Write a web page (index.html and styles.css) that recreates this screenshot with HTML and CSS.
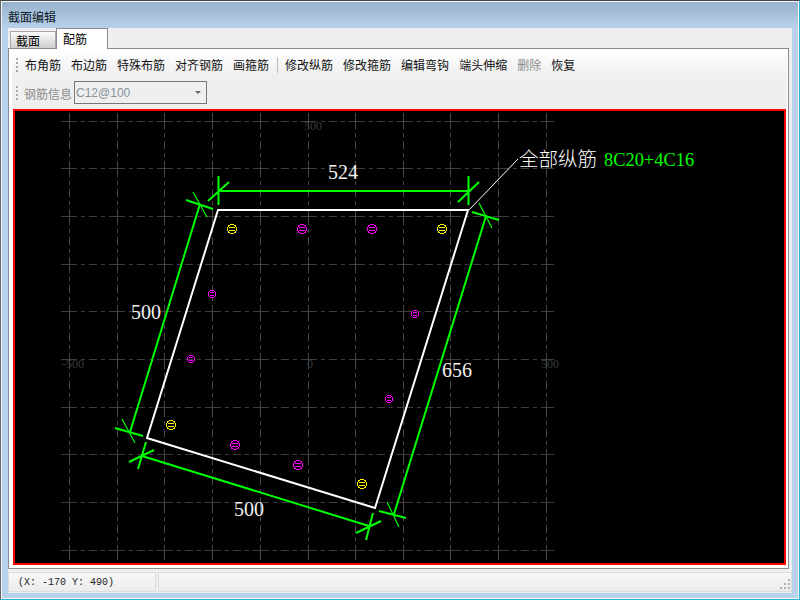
FILE: index.html
```html
<!DOCTYPE html>
<html lang="zh">
<head>
<meta charset="utf-8">
<title>截面编辑</title>
<link rel="stylesheet" href="styles.css">
</head>
<body>
<div class="window">
  <div class="frame">
    <div class="titlebar">截面编辑</div>
    <div class="panel">
      <div class="tabs">
        <div class="tab">截面</div>
        <div class="tab tab-active">配筋</div>
      </div>
      <div class="pane">
        <div class="toolbar toolbar-main">
          <span class="grip"></span>
          <span class="tool">布角筋</span>
          <span class="tool">布边筋</span>
          <span class="tool">特殊布筋</span>
          <span class="tool">对齐钢筋</span>
          <span class="tool">画箍筋</span>
          <span class="sep"></span>
          <span class="tool">修改纵筋</span>
          <span class="tool">修改箍筋</span>
          <span class="tool">编辑弯钩</span>
          <span class="tool">端头伸缩</span>
          <span class="tool tool-off">删除</span>
          <span class="tool">恢复</span>
        </div>
        <div class="toolbar toolbar-info">
          <span class="grip"></span>
          <span class="info-label">钢筋信息</span>
          <div class="combo"><span class="combo-text">C12@100</span><span class="combo-arrow"></span></div>
        </div>
        <div class="canvas">
          <svg class="drawing" viewBox="15 111 770 452" width="770" height="452" xmlns="http://www.w3.org/2000/svg">
            <defs>
              <g id="bar-big"><circle r="4.5"/><path d="M-3 -1.500H3M-3 1.500H3"/></g>
              <g id="bar-small"><circle r="3.5"/><path d="M-2 -1.500H2M-2 1.500H2"/></g>
            </defs>
            <path class="grid" d="M61 121.5H554M61 168.5H554M61 216.5H554M61 264.5H554M61 311.5H554M61 359.5H554M61 407.5H554M61 454.5H554M61 502.5H554M61 550.5H554"/>
            <path class="grid grid-v" d="M69.5 113V560M117.5 113V560M164.5 113V560M212.5 113V560M260.5 113V560M308.5 113V560M355.5 113V560M403.5 113V560M450.5 113V560M498.5 113V560M546.5 113V560"/>
            <text class="axis" x="304" y="130">500</text>
            <text class="axis" x="307" y="368">0</text>
            <text class="axis" x="62" y="368">-500</text>
            <text class="axis" x="541" y="368">500</text>

            <polygon class="outline" points="218,210 468,210 375,508 147,438"/>
            <path class="leader" d="M469 210L518 159"/>

            <path class="dim" d="M218 191H468M200 204L130 432M142 456L369 526M486 216L394 514"/>
            <path class="dim" d="M218.500 176V205M208 201L229 182M468.500 176V205M458 202L479 182"/>
            <path class="dim" d="M186 200L213 209M115 428L143 436M472 212L499 220M379 511L406 518"/>
            <path class="dim" d="M146 442L138 469M129 462L154 450M373 513L366 540M356 533L381 521"/>
            <path class="dim-thin" d="M193 192L207 217M122 419L135 443M479 203L492 228M387 502L399 527"/>

            <use class="bar-yellow" href="#bar-big" x="232" y="229"/>
            <use class="bar-yellow" href="#bar-big" x="442" y="229"/>
            <use class="bar-yellow" href="#bar-big" x="171" y="425"/>
            <use class="bar-yellow" href="#bar-big" x="362" y="484"/>
            <use class="bar-magenta" href="#bar-big" x="302" y="229"/>
            <use class="bar-magenta" href="#bar-big" x="372" y="229"/>
            <use class="bar-magenta" href="#bar-big" x="235" y="445"/>
            <use class="bar-magenta" href="#bar-big" x="298" y="465"/>
            <use class="bar-magenta" href="#bar-small" x="212" y="294"/>
            <use class="bar-magenta" href="#bar-small" x="415" y="314"/>
            <use class="bar-magenta" href="#bar-small" x="191" y="359"/>
            <use class="bar-magenta" href="#bar-small" x="389" y="399"/>

            <text class="size" x="328" y="179">524</text>
            <text class="size" x="131" y="319">500</text>
            <text class="size" x="442" y="377">656</text>
            <text class="size" x="234" y="516">500</text>
            <text class="note" x="519" y="166">全部纵筋</text>
            <text class="note-value" x="604" y="166">8C20+4C16</text>
          </svg>
        </div>
      </div>
      <div class="statusbar">
        <div class="status-cell status-coords">(X: -170 Y: 490)</div>
        <div class="status-cell status-rest">
          <svg class="size-grip" viewBox="0 0 12 12" width="12" height="12" xmlns="http://www.w3.org/2000/svg">
            <path d="M9 0h2v2H9zM5 4h2v2H5zM9 4h2v2H9zM1 8h2v2H1zM5 8h2v2H5zM9 8h2v2H9z"/>
          </svg>
        </div>
      </div>
    </div>
  </div>
</div>
</body>
</html>
```
FILE: styles.css
```css
* { box-sizing: border-box; }
html, body { margin: 0; padding: 0; }
body {
  width: 800px;
  height: 600px;
  overflow: hidden;
  font-family: "Noto Sans CJK SC", "Liberation Sans", sans-serif;
  font-size: 12px;
  color: #000;
}
.window {
  width: 800px;
  height: 600px;
  border-top: 1px solid #444;
  border-left: 1px solid #666;
  border-right: 1px solid #2ab4da;
  border-bottom: 1px solid #2ab4da;
}
.frame {
  height: 100%;
  display: flex;
  flex-direction: column;
  border: 1px solid #f4f8fc;
  padding: 0 6px 5px;
  background: linear-gradient(#97b2cc 0, #b9d1ea 26px, #b9d1ea 100%);
}
.titlebar {
  height: 26px;
  flex: none;
  line-height: 30px;
  color: #101828;
}
.panel {
  flex: 1;
  min-height: 0;
  display: flex;
  flex-direction: column;
  background: #efefef;
}
.tabs {
  height: 20px;
  flex: none;
  display: flex;
  align-items: flex-end;
  padding-left: 2px;
}
.tab {
  width: 46px;
  height: 17px;
  padding-left: 5px;
  line-height: 18px;
  border: 1px solid #a8a8a8;
  border-bottom: 0;
  background: linear-gradient(#fafafa, #cfcfcf);
}
.tab-active {
  width: 52px;
  height: 21px;
  margin-bottom: -1px;
  padding-left: 6px;
  line-height: 20px;
  border-color: #8a8a94;
  background: #fff;
  position: relative;
  z-index: 1;
}
.pane {
  height: 521px;
  flex: none;
  margin-right: 3px;
  border: 1px solid #8a8a94;
  padding: 3px 1px 3px 3px;
  background: #fff;
  display: flex;
  flex-direction: column;
}
.toolbar {
  display: flex;
  align-items: center;
  flex: none;
}
.toolbar-main {
  height: 26px;
  padding-left: 4px;
  gap: 10px;
  background: linear-gradient(#fefefe, #f9f9f9 30%, #efefef 90%);
}
.toolbar-info {
  height: 31px;
  padding-left: 4px;
  background: #efefef;
}
.grip {
  width: 2px;
  height: 15px;
  flex: none;
  margin-right: -3px;
  background: repeating-linear-gradient(#aaa 0, #aaa 2px, transparent 2px, transparent 4px);
}
.tool { white-space: nowrap; line-height: 16px; color: #111; }
.tool-off { color: #8a8a8a; }
.sep {
  width: 1px;
  height: 16px;
  margin: 0 -3px 0 -2px;
  background: #bbb;
}
.info-label { margin-left: 9px; color: #8a8a8a; }
.combo {
  width: 133px;
  height: 23px;
  margin-left: 2px;
  margin-top: -2px;
  border: 1px solid #777;
  display: flex;
  align-items: center;
  justify-content: space-between;
  padding: 0 5px 0 1px;
  background: #efefef;
}
.combo-text {
  font-family: "Liberation Sans", sans-serif;
  font-size: 12px;
  color: #87929c;
}
.combo-arrow {
  width: 0;
  height: 0;
  border-left: 3px solid transparent;
  border-right: 3px solid transparent;
  border-top: 3px solid #666;
}
.canvas {
  flex: 1;
  min-height: 0;
  margin: 0 1px;
  border: 2px solid #f00;
  background: #000;
  overflow: hidden;
}
.drawing { display: block; }
.grid {
  fill: none;
  stroke: #3c3c3c;
  stroke-width: 1;
  stroke-dasharray: 16 4 4 4 8 4 4 4;
  shape-rendering: crispEdges;
}
.grid-v { stroke: #484848; }
.axis {
  font-family: "Liberation Serif", serif;
  font-size: 12px;
  fill: #3a3a3a;
}
.outline {
  fill: none;
  stroke: #fff;
  stroke-width: 2;
}
.leader {
  fill: none;
  stroke: #fff;
  stroke-width: 1;
}
.dim {
  fill: none;
  stroke: #0f0;
  stroke-width: 2;
}
.dim-thin {
  fill: none;
  stroke: #0f0;
  stroke-width: 1.2;
}
.bar-yellow, .bar-magenta {
  fill: none;
  stroke-width: 1;
  shape-rendering: crispEdges;
}
.bar-yellow { stroke: #ff0; }
.bar-magenta { stroke: #f0f; }
.size {
  font-family: "Liberation Serif", serif;
  font-size: 20px;
  fill: #f2f2f2;
}
.note {
  font-family: "Noto Sans CJK SC", sans-serif;
  font-size: 19.5px;
  font-weight: 300;
  fill: #fff;
}
.note-value {
  font-family: "Liberation Serif", serif;
  font-size: 18.4px;
  fill: #0f0;
}
.statusbar {
  height: 20px;
  flex: none;
  margin-top: 3px;
  display: flex;
  gap: 2px;
}
.status-cell {
  border: 1px solid #dcdcdc;
  background: linear-gradient(#f8f8f8, #ececec);
}
.status-coords {
  width: 148px;
  padding-left: 9px;
  font-family: "Liberation Mono", monospace;
  font-size: 10px;
  line-height: 19px;
  color: #222;
  white-space: pre;
}
.status-rest {
  flex: 1;
  display: flex;
  justify-content: flex-end;
  align-items: flex-end;
}
.size-grip { display: block; }
.size-grip path { fill: #b0b0b0; }
```
